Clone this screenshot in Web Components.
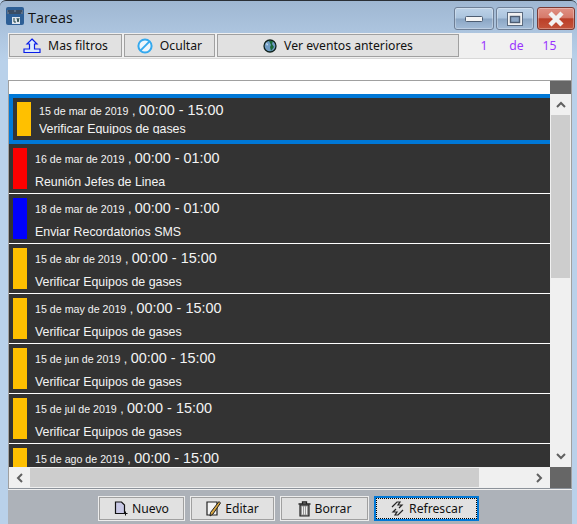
<!DOCTYPE html>
<html>
<head>
<meta charset="utf-8">
<title>Tareas</title>
<style>
    html, body { margin: 0; padding: 0; background: #b9d1ea; }
</style>
</head>
<body>
<win-frame>
    <win-caption slot="caption" title-text="Tareas"></win-caption>
    <win-toolbar slot="toolbar">
        <tool-button style="width:113px">
            <svg slot="icon" width="18" height="16" viewBox="0 0 18 16"><path d="M9 1 L14 6 H11.5 V11 H17 V14.5 H1 V11 H6.5 V6 H4 Z" fill="#dcebff" stroke="#0a1ee8" stroke-width="1.2"/></svg>
            Mas filtros
        </tool-button>
        <tool-button style="width:91px">
            <svg slot="icon" width="16" height="16" viewBox="0 0 16 16"><circle cx="8" cy="8" r="6.6" fill="#eef6fc" stroke="#35a9ee" stroke-width="2"/><path d="M3.4 12.6 L12.6 3.4" stroke="#35a9ee" stroke-width="2"/></svg>
            Ocultar
        </tool-button>
        <tool-button style="width:242px">
            <svg slot="icon" width="14" height="14" viewBox="0 0 14 14"><circle cx="7" cy="7" r="6" fill="#6f9cc4" stroke="#10221c" stroke-width="1.3"/><path d="M6 2 L10 2 L9 5 L11 8 L8 12 L7 8 L8 6 Z" fill="#1c6a3a"/><path d="M3 4 L5 5 L4 7 Z" fill="#d8e8f2"/></svg>
            Ver eventos anteriores
        </tool-button>
        <page-count from="1" of="15"></page-count>
    </win-toolbar>
    <div slot="search" style="height:21px;background:#fff;border:1px solid #a0a0a0;border-width:1px 1px 1px 0;border-top-color:#d8d8d8"></div>
    <task-list slot="list">
        <task-row selected color="#ffc000" date="15 de mar de 2019" time="00:00 - 15:00" text="Verificar Equipos de gases"></task-row>
        <task-row color="#ff0000" date="16 de mar de 2019" time="00:00 - 01:00" text="Reunión Jefes de Linea"></task-row>
        <task-row color="#0000ff" date="18 de mar de 2019" time="00:00 - 01:00" text="Enviar Recordatorios SMS"></task-row>
        <task-row color="#ffc000" date="15 de abr de 2019" time="00:00 - 15:00" text="Verificar Equipos de gases"></task-row>
        <task-row color="#ffc000" date="15 de may de 2019" time="00:00 - 15:00" text="Verificar Equipos de gases"></task-row>
        <task-row color="#ffc000" date="15 de jun de 2019" time="00:00 - 15:00" text="Verificar Equipos de gases"></task-row>
        <task-row color="#ffc000" date="15 de jul de 2019" time="00:00 - 15:00" text="Verificar Equipos de gases"></task-row>
        <task-row color="#ffc000" date="15 de ago de 2019" time="00:00 - 15:00" text="Verificar Equipos de gases"></task-row>
    </task-list>
    <win-footer slot="footer">
        <tool-button flat style="width:87px">
            <svg slot="icon" width="14" height="15" viewBox="0 0 14 15"><path d="M1.5 1 H7.5 L10.5 4 V12.5 H1.5 Z" fill="#c9c9e6" stroke="#111" stroke-width="1.2"/><path d="M11.5 10.5 V14.5 M9.5 12.5 H13.5" stroke="#111" stroke-width="1"/></svg>
            Nuevo
        </tool-button>
        <tool-button flat style="width:85px">
            <svg slot="icon" width="15" height="16" viewBox="0 0 15 16"><path d="M1 1 H11 V14 H1 Z" fill="#f4f4f4" stroke="#222" stroke-width="1.2"/><path d="M13 0.5 L14.5 2 L7 13 L4 15 L4.5 11.5 Z" fill="#d8a640" stroke="#222" stroke-width="1"/></svg>
            Editar
        </tool-button>
        <tool-button flat style="width:89px">
            <svg slot="icon" width="13" height="16" viewBox="0 0 13 16"><path d="M0.5 3 H12.5 M4.5 3 V1 H8.5 V3" fill="none" stroke="#222" stroke-width="1.3"/><path d="M2 4 H11 V15 H2 Z" fill="#999" stroke="#222" stroke-width="1.2"/><path d="M4.5 5.5 V13.5 M6.5 5.5 V13.5 M8.5 5.5 V13.5" stroke="#eee" stroke-width="1"/></svg>
            Borrar
        </tool-button>
        <tool-button flat focused style="width:105px">
            <svg slot="icon" width="15" height="15" viewBox="0 0 15 15"><path d="M2 6 L7 1 L10 1 L8 4 L12 4 L9 7 M13 9 L8 14 L5 14 L7 11 L3 11 L6 8" fill="#ddd" stroke="#222" stroke-width="1.2"/></svg>
            Refrescar
        </tool-button>
    </win-footer>
</win-frame>

<script>
class WinFrame extends HTMLElement {
    constructor() {
        super();
        this.attachShadow({ mode: "open" }).innerHTML = `
        <style>
            :host {
                display: block;
                width: 577px;
                height: 524px;
                overflow: hidden;
                background: linear-gradient(180deg, #9fb7d2 0, #b9d1ea 60px);
                border-top: 1px solid #2a2f36;
                box-sizing: border-box;
                border-radius: 6px 6px 0 0;
            }
            .body {
                margin: 0 5px 0 8px;
                display: flex;
                flex-direction: column;
                height: 491px;
                background: #f0f0f0;
            }
            .main { flex: 1; min-height: 0; display: flex; flex-direction: column; }
        </style>
        <slot name="caption"></slot>
        <div class="body">
            <slot name="toolbar"></slot>
            <slot name="search"></slot>
            <div class="main"><slot name="list"></slot></div>
            <slot name="footer"></slot>
        </div>`;
    }
}

class WinCaption extends HTMLElement {
    connectedCallback() {
        const root = this.attachShadow({ mode: "open" });
        root.innerHTML = `
        <style>
            :host {
                display: flex;
                align-items: flex-start;
                height: 32px;
                padding: 6px 2px 0 6px;
                box-sizing: border-box;
                font: 14.4px "Open Sans", "Noto Sans", sans-serif;
                color: #111;
            }
            .title { margin-left: 4px; margin-top: 1px; line-height: 20px; flex: 1; }
            .ctl {
                width: 40px;
                height: 23px;
                box-sizing: border-box;
                border: 1px solid #6e7f96;
                border-radius: 3px;
                display: flex;
                align-items: center;
                justify-content: center;
                background: linear-gradient(180deg, #bdd2e8 0, #aac3dd 48%, #8ba6c4 52%, #a3bcd8 100%);
                box-shadow: inset 0 0 0 1px rgba(255,255,255,.3);
            }
            .close {
                border-color: #7a3a34;
                background: linear-gradient(180deg, #e09184 0, #d67a6b 45%, #bb3f28 52%, #c4543b 100%);
            }
            .wrap { display: flex; gap: 2px; }
        </style>
        <svg width="18" height="18" viewBox="0 0 18 18">
            <rect width="18" height="18" rx="2" fill="#2d5f96"/>
            <rect x="1" y="3" width="16" height="4" fill="#5a6f89"/>
            <path d="M2 4 H8 M10 4 H16 M3 6 H15" stroke="#1c2c3f" stroke-width="1"/>
            <rect x="6" y="10" width="8" height="7" fill="#dfe6ef"/>
            <path d="M8 11 V15 H10 M11 11 L12 15 L13 11" stroke="#244" stroke-width="1" fill="none"/>
        </svg>
        <span class="title">${this.getAttribute("title-text")}</span>
        <div class="wrap">
            <div class="ctl"><svg width="18" height="8"><rect x="0.5" y="1.5" width="17" height="5" rx="1" fill="#f4f4f4" stroke="#4d5d72"/></svg></div>
            <div class="ctl" style="width:38px"><svg width="18" height="16"><rect x="1.5" y="1.5" width="15" height="13" fill="#f2f2f2" stroke="#5b6b80"/><rect x="4.5" y="5.5" width="9" height="6" fill="#8da8c6" stroke="#4d5d72" stroke-width="1.4"/></svg></div>
            <div class="ctl close" style="width:38px;margin-left:1px"><svg width="20" height="16" viewBox="0 0 20 16"><path d="M4 2 L16 14 M16 2 L4 14" stroke="#f2f2f2" stroke-width="4.5" fill="none"/></svg></div>
        </div>`;
    }
}

class WinToolbar extends HTMLElement {
    constructor() {
        super();
        this.attachShadow({ mode: "open" }).innerHTML = `
        <style>
            :host {
                display: flex;
                gap: 2px;
                height: 25px;
                padding: 1px 0 1px 1px;
                box-sizing: border-box;
                background: #f0f0f0;
            }
        </style>
        <slot></slot>`;
    }
}

class ToolButton extends HTMLElement {
    constructor() {
        super();
        this.attachShadow({ mode: "open" }).innerHTML = `
        <style>
            :host {
                display: flex;
                align-items: center;
                justify-content: center;
                gap: 7px;
                height: 23px;
                box-sizing: border-box;
                background: #e1e1e1;
                border: 1px solid #a0a0a0;
                font: 12.2px "Noto Sans", "Open Sans", sans-serif;
                color: #111;
                white-space: nowrap;
            }
            :host([flat]) {
                height: 25px;
                border: 1px solid #ededed;
                box-shadow: inset 0 0 0 1px #a0a0a0;
                gap: 4px;
            }
            :host([focused]) {
                border: 2px solid #0078d7;
                box-shadow: none;
                outline: 1px dotted #000;
                outline-offset: -3px;
            }
            ::slotted(svg) { display: block; flex: none; }
        </style>
        <slot name="icon"></slot>
        <slot></slot>`;
    }
}

class PageCount extends HTMLElement {
    connectedCallback() {
        const root = this.attachShadow({ mode: "open" });
        root.innerHTML = `
        <style>
            :host {
                display: grid;
                grid-template-columns: 32px 33px 33px;
                flex: 1;
                padding-left: 7px;
                align-items: center;
                justify-items: center;
                font: 12.2px "Noto Sans", "Open Sans", sans-serif;
                color: #9933ff;
            }
        </style>
        <span>${this.getAttribute("from")}</span><span>de</span><span>${this.getAttribute("of")}</span>`;
    }
}

class TaskList extends HTMLElement {
    constructor() {
        super();
        this.attachShadow({ mode: "open" }).innerHTML = `
        <style>
            :host {
                display: grid;
                grid-template-columns: 1fr 21px;
                grid-template-rows: 1fr 21px;
                height: 408px;
                box-sizing: border-box;
                border-left: 1px solid #a0a0a0;
                border-right: 1px solid #a0a0a0;
                border-bottom: 1px solid #8c929a;
                background: #fff;
            }
            .rows { overflow: hidden; padding-top: 13px; min-width: 0; min-height: 0; }
            .vbar { display: flex; flex-direction: column; background: #f0f0f0; min-height: 0; }
            .corner { height: 13px; background: #666; flex: none; }
            .hbar { display: flex; background: #f0f0f0; }
            .end { height: 21px; flex: none; background: #666; }
            .btn { flex: none; width: 21px; height: 21px; display: flex; align-items: center; justify-content: center; background: #f0f0f0; }
            .vthumb { height: 163px; margin: 0 1px; background: #cdcdcd; flex: none; }
            .hthumb { width: 449px; background: #cdcdcd; margin: 1px 0; flex: none; }
            .fill { flex: 1; }
            path { fill: none; stroke: #606060; stroke-width: 2; }
        </style>
        <div class="rows"><slot></slot></div>
        <div class="vbar">
            <div class="corner"></div>
            <div class="btn"><svg width="10" height="7"><path d="M1 6 L5 2 L9 6"/></svg></div>
            <div class="vthumb"></div>
            <div class="fill"></div>
            <div class="btn"><svg width="10" height="7"><path d="M1 1 L5 5 L9 1"/></svg></div>
        </div>
        <div class="hbar">
            <div class="btn"><svg width="7" height="10"><path d="M6 1 L2 5 L6 9"/></svg></div>
            <div class="hthumb"></div>
            <div class="fill"></div>
            <div class="btn"><svg width="7" height="10"><path d="M1 1 L5 5 L1 9"/></svg></div>
        </div>
        <div class="end"></div>`;
    }
}

class TaskRow extends HTMLElement {
    connectedCallback() {
        const root = this.attachShadow({ mode: "open" });
        root.innerHTML = `
        <style>
            :host {
                display: flex;
                gap: 8px;
                box-sizing: border-box;
                height: 50px;
                padding: 4px;
                background: #333;
                border-bottom: 1px solid #fff;
                color: #f4f4f4;
                font: 12.4px "Liberation Sans", Arial, sans-serif;
            }
            :host([selected]) {
                border: 4px solid #0078d7;
                box-shadow: 0 1px 0 #fff;
                margin-right: -6px;
            }
            .bar { width: 14px; flex: none; background: var(--bar); }
            .txt { display: flex; flex-direction: column; min-width: 0; }
            .when { line-height: 20px; height: 20px; white-space: nowrap; }
            .date { font-size: 10.67px; }
            .time { font-size: 14.4px; }
            .desc { margin-top: 7px; line-height: 15px; white-space: nowrap; }
            :host([selected]) .when { margin-top: -2px; }
            :host([selected]) .desc { margin-top: 3px; height: 11px; overflow: hidden; line-height: 13px; }
        </style>
        <div class="bar" style="--bar:${this.getAttribute("color")}"></div>
        <div class="txt">
            <div class="when"><span class="date">${this.getAttribute("date")}</span> , <span class="time">${this.getAttribute("time")}</span></div>
            <div class="desc">${this.getAttribute("text")}</div>
        </div>`;
    }
}

class WinFooter extends HTMLElement {
    constructor() {
        super();
        this.attachShadow({ mode: "open" }).innerHTML = `
        <style>
            :host {
                display: flex;
                gap: 5px;
                height: 34px;
                box-sizing: border-box;
                padding: 6px 0 0 90px;
                background: #adb2b9;
            }
        </style>
        <slot></slot>`;
    }
}

customElements.define("win-frame", WinFrame);
customElements.define("win-caption", WinCaption);
customElements.define("win-toolbar", WinToolbar);
customElements.define("tool-button", ToolButton);
customElements.define("page-count", PageCount);
customElements.define("task-list", TaskList);
customElements.define("task-row", TaskRow);
customElements.define("win-footer", WinFooter);
</script>
</body>
</html>
